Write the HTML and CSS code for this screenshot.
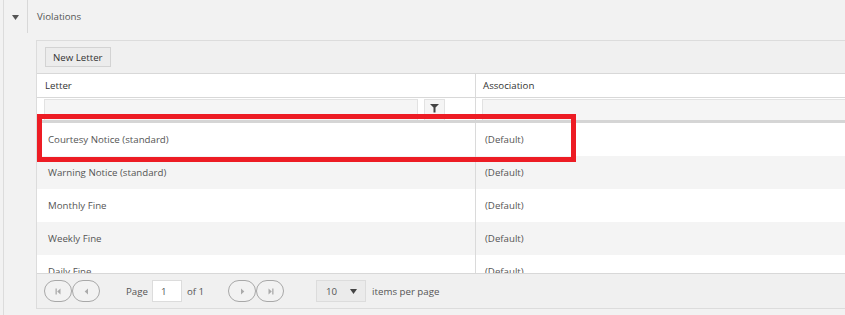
FILE: index.html
```html
<!DOCTYPE html>
<html lang="en">
<head>
    <meta charset="UTF-8">
    <meta name="viewport" content="width=device-width, initial-scale=1.0">
    <title>Violations - Letters</title>
    <link rel="stylesheet" href="styles.css">
</head>
<body>
    <div class="page">
        <div class="section">
            <div class="section-head">
                <span class="toggle">
                    <svg width="7" height="5" viewBox="0 0 7 5"><path d="M0 0 H7 L3.5 5 Z" fill="#555"/></svg>
                </span>
                <span class="title">Violations</span>
            </div>

            <div class="panel">
                <div class="toolbar">
                    <button class="btn">New Letter</button>
                </div>

                <div class="grid">
                    <div class="grid-head">
                        <div class="th col-letter">Letter</div>
                        <div class="th col-assoc">Association</div>
                    </div>

                    <div class="filter-row">
                        <div class="fcell col-letter">
                            <input class="filter-input letter-input" type="text">
                            <button class="filter-btn">
                                <svg width="9" height="9" viewBox="0 0 9 9"><path d="M0 0 H9 L5.5 3.5 V8.5 H3.5 V3.5 Z" fill="#444"/></svg>
                            </button>
                        </div>
                        <div class="fcell col-assoc">
                            <input class="filter-input assoc-input" type="text">
                        </div>
                    </div>

                    <div class="grid-body">
                        <div class="row">
                            <div class="td col-letter">Courtesy Notice (standard)</div>
                            <div class="td col-assoc">(Default)</div>
                        </div>
                        <div class="row alt">
                            <div class="td col-letter">Warning Notice (standard)</div>
                            <div class="td col-assoc">(Default)</div>
                        </div>
                        <div class="row">
                            <div class="td col-letter">Monthly Fine</div>
                            <div class="td col-assoc">(Default)</div>
                        </div>
                        <div class="row alt">
                            <div class="td col-letter">Weekly Fine</div>
                            <div class="td col-assoc">(Default)</div>
                        </div>
                        <div class="row">
                            <div class="td col-letter">Daily Fine</div>
                            <div class="td col-assoc">(Default)</div>
                        </div>
                    </div>

                    <div class="pager">
                        <div class="nav-group">
                            <button class="nav-btn"><svg width="7" height="7" viewBox="0 0 7 7"><path d="M0.5 0.5 H1.8 V6.5 H0.5 Z M5.5 0.5 V6.5 L2.2 3.5 Z" fill="#aaa"/></svg></button>
                            <button class="nav-btn"><svg width="7" height="7" viewBox="0 0 7 7"><path d="M5 0.5 V6.5 L1.7 3.5 Z" fill="#aaa"/></svg></button>
                        </div>
                        <span class="pager-label">Page</span>
                        <input class="page-input" type="text" value="1">
                        <span class="pager-of">of 1</span>
                        <div class="nav-group next-group">
                            <button class="nav-btn"><svg width="7" height="7" viewBox="0 0 7 7"><path d="M2 0.5 V6.5 L5.3 3.5 Z" fill="#aaa"/></svg></button>
                            <button class="nav-btn"><svg width="7" height="7" viewBox="0 0 7 7"><path d="M1.5 0.5 V6.5 L4.8 3.5 Z M5.2 0.5 H6.5 V6.5 H5.2 Z" fill="#aaa"/></svg></button>
                        </div>
                        <div class="size-select">
                            <span>10</span>
                            <svg width="7" height="5" viewBox="0 0 7 5"><path d="M0 0 H7 L3.5 5 Z" fill="#444"/></svg>
                        </div>
                        <span class="pager-items">items per page</span>
                    </div>
                </div>
            </div>
        </div>

        <div class="highlight"></div>
    </div>
</body>
</html>
```

FILE: styles.css
```css
body {
    margin: 0;
    background: #f2f2f2;
    font-family: "Open Sans", Arial, sans-serif;
    font-size: 9.7px;
    color: #555;
    overflow: hidden;
}
.page {
    position: relative;
    height: 315px;
}
.section {
    margin-left: 3px;
    border-left: 1px solid #dcdcdc;
    height: 315px;
}
.section-head {
    display: flex;
    height: 33px;
    align-items: stretch;
}
.toggle {
    width: 24px;
    box-sizing: border-box;
    border-right: 1px solid #d8d8d8;
    display: flex;
    align-items: center;
    justify-content: center;
    padding-top: 2px;
}
.title {
    display: flex;
    align-items: center;
    padding-left: 9px;
    color: #555;
}
.panel {
    margin: 7px 0 0 32px;
    width: 860px;
    border: 1px solid #dcdcdc;
    background: #f0f0f0;
}
.toolbar {
    padding: 6px 8px;
}
.btn {
    height: 20px;
    padding: 0 7px;
    border: 1px solid #d3d3d3;
    background: #ececec;
    font-family: inherit;
    font-size: 9.7px;
    color: #333;
    display: block;
}
.grid {
    border-top: 1px solid #d8d8d8;
    background: #fff;
}
.grid-head, .filter-row, .row {
    display: grid;
    grid-template-columns: 439px 1fr;
}
.col-letter {
    border-right: 1px solid #dadada;
}
.th {
    height: 23px;
    line-height: 23px;
    padding: 0 8px;
    color: #333;
    border-bottom: 1px solid #d8d8d8;
}
.th.col-assoc {
    padding-left: 7px;
}
.filter-row {
    height: 22px;
    border-bottom: 3px solid #d5d5d5;
}
.fcell {
    display: flex;
    align-items: flex-start;
    padding-top: 1px;
}
.fcell.col-letter {
    padding-left: 7px;
}
.fcell.col-assoc {
    padding-left: 6px;
}
.filter-input {
    height: 21px;
    box-sizing: border-box;
    border: 1px solid #e2e2e2;
    border-bottom: none;
    background: #f5f5f5;
    margin: 0;
    padding: 0;
}
.letter-input {
    width: 374px;
}
.assoc-input {
    flex: 1;
}
.filter-btn {
    width: 21px;
    height: 21px;
    margin-left: 6px;
    border: 1px solid #e2e2e2;
    border-bottom: none;
    background: #f5f5f5;
    padding: 0 0 4px;
    display: flex;
    align-items: center;
    justify-content: center;
}
.grid-body {
    height: 150px;
    overflow: hidden;
}
.row {
    height: 33px;
    background: #fff;
}
.row.alt {
    background: #f4f4f4;
}
.td {
    line-height: 33px;
    padding-left: 11px;
    white-space: nowrap;
}
.td.col-assoc {
    padding-left: 9px;
}
.pager {
    height: 34px;
    border-top: 1px solid #d8d8d8;
    background: #f0f0f0;
    display: flex;
    align-items: center;
    padding-left: 7px;
}
.nav-group {
    display: flex;
}
.nav-btn {
    width: 28px;
    height: 22px;
    border: 1px solid #a8a8a8;
    border-radius: 11px;
    background: #f2f2f2;
    padding: 0;
    display: flex;
    align-items: center;
    justify-content: center;
}
.pager-label {
    margin-left: 26px;
}
.page-input {
    width: 30px;
    height: 22px;
    box-sizing: border-box;
    margin: 0 0 0 4px;
    padding: 0 0 0 8px;
    border: 1px solid #dcdcdc;
    background: #fff;
    font-family: inherit;
    font-size: 9.7px;
    color: #555;
}
.pager-of {
    margin-left: 5px;
}
.next-group {
    margin-left: 24px;
}
.size-select {
    margin-left: 32px;
    width: 50px;
    height: 22px;
    box-sizing: border-box;
    border: 1px solid #dcdcdc;
    background: #ebebeb;
    display: flex;
    align-items: center;
    justify-content: space-between;
    padding: 0 8px 0 9px;
}
.pager-items {
    margin-left: 6px;
}
.highlight {
    position: absolute;
    left: 37px;
    top: 114px;
    width: 539px;
    height: 48px;
    box-sizing: border-box;
    border: 5px solid #ed1c24;
    pointer-events: none;
}
```
